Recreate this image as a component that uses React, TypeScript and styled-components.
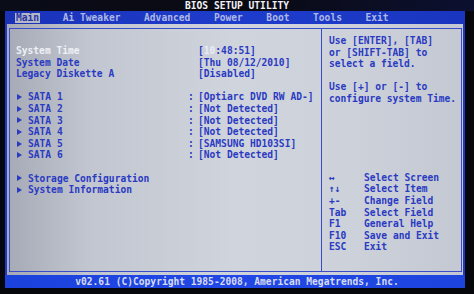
import React from "react";
import styled, { createGlobalStyle } from "styled-components";

const Global = createGlobalStyle`
  html, body { margin: 0; padding: 0; background: #05060a; }
  * { box-sizing: border-box; }
`;

const MONO = `"DejaVu Sans Mono", "Liberation Mono", monospace`;

const Screen = styled.div`
  width: 474px;
  height: 294px;
  background: #06070c;
  padding: 0 9px 6px 5px;
  display: flex;
  flex-direction: column;
  font-family: ${MONO};
  font-weight: bold;
  font-size: 9.6px;
  line-height: 11.6px;
  overflow: hidden;
`;

const TitleBar = styled.div`
  height: 11px;
  margin-right: -9px;
  margin-left: -5px;
  display: flex;
  align-items: center;
  justify-content: center;
  color: #f2f3f8;
  background: linear-gradient(90deg, #0a0c18 0%, #0a0a12 50%, #0c1030 100%);
`;

const Frame = styled.div`
  flex: 1;
  display: flex;
  flex-direction: column;
  background: #1c38c4;
`;

const MenuBar = styled.div`
  height: 13px;
  display: flex;
  align-items: center;
  gap: 21.6px;
  padding-left: 10px;
  background: linear-gradient(90deg, #1a32b8 0%, #1e3ccc 50%, #1a36c0 100%);
`;

const MenuItem = styled.span<{ $active?: boolean }>`
  padding: 0 1px;
  line-height: 10px;
  color: ${(p) => (p.$active ? "#2a36a8" : "#aeb8e6")};
  background: ${(p) => (p.$active ? "#b4b8c6" : "transparent")};
`;

const Body = styled.div`
  flex: 1;
  margin: 0 2px;
  padding: 4px 1px 3px 2px;
  background: linear-gradient(90deg, #a6aab6 0%, #c2c6d0 18%, #d0d4dc 50%, #cdd1da 75%, #c4c8d2 100%);
`;

const Box = styled.div`
  height: 100%;
  border: 1px solid #3b4cc8;
  display: grid;
  grid-template-columns: 312px 1fr;
`;

const LeftPane = styled.div`
  border-right: 1px solid #3b4cc8;
  padding: 16px 0 0 6px;
  display: flex;
  flex-direction: column;
`;

const RightPane = styled.div`
  padding: 6px 0 18px 7px;
  display: flex;
  flex-direction: column;
`;

const Row = styled.div`
  height: 11.6px;
  display: grid;
  grid-template-columns: 172px 10px 1fr;
  align-items: center;
  white-space: pre;
  color: #2a3ac2;
`;

const Label = styled.span<{ $selected?: boolean }>`
  display: flex;
  align-items: center;
  color: ${(p) => (p.$selected ? "#eef0f6" : "#2a3ac2")};
`;

const Marker = styled.span`
  display: inline-block;
  width: 0;
  height: 0;
  margin: 0 6px 0 1px;
  border-left: 5px solid #2a3ac2;
  border-top: 3px solid transparent;
  border-bottom: 3px solid transparent;
`;

const Colon = styled.span`
  color: #2a3ac2;
`;

const Value = styled.span`
  color: #2a3ac2;
`;

const Hot = styled.span`
  color: #e8ecf6;
`;

const Gap = styled.div`
  height: 11.6px;
`;

const HelpLine = styled.div`
  height: 11.6px;
  white-space: pre;
  color: #2a3ac2;
`;

const KeyList = styled.div`
  margin-top: auto;
  display: flex;
  flex-direction: column;
`;

const KeyRow = styled.div`
  height: 11.6px;
  display: grid;
  grid-template-columns: 35px 1fr;
  color: #2a3ac2;
  white-space: pre;
`;

const Footer = styled.div`
  height: 13px;
  display: flex;
  align-items: center;
  justify-content: center;
  padding-left: 4px;
  color: #d6dbf2;
  background: linear-gradient(90deg, #1c42dc 0%, #2148e6 50%, #1e44de 100%);
`;

const menus = ["Main", "Ai Tweaker", "Advanced", "Power", "Boot", "Tools", "Exit"];

type Item = { label: string; value?: React.ReactNode; sub?: boolean; colon?: boolean; selected?: boolean } | null;

const items: Item[] = [
  { label: "System Time", value: <>[<Hot>10</Hot>:48:51]</>, selected: true },
  { label: "System Date", value: "[Thu 08/12/2010]" },
  { label: "Legacy Diskette A", value: "[Disabled]" },
  null,
  { label: "SATA 1", value: "[Optiarc DVD RW AD-]", sub: true, colon: true },
  { label: "SATA 2", value: "[Not Detected]", sub: true, colon: true },
  { label: "SATA 3", value: "[Not Detected]", sub: true, colon: true },
  { label: "SATA 4", value: "[Not Detected]", sub: true, colon: true },
  { label: "SATA 5", value: "[SAMSUNG HD103SI]", sub: true, colon: true },
  { label: "SATA 6", value: "[Not Detected]", sub: true, colon: true },
  null,
  { label: "Storage Configuration", sub: true },
  { label: "System Information", sub: true },
];

const help = [
  "Use [ENTER], [TAB]",
  "or [SHIFT-TAB] to",
  "select a field.",
  "",
  "Use [+] or [-] to",
  "configure system Time.",
];

const keys: [string, string][] = [
  ["\u2194", "Select Screen"],
  ["\u2191\u2193", "Select Item"],
  ["+-", "Change Field"],
  ["Tab", "Select Field"],
  ["F1", "General Help"],
  ["F10", "Save and Exit"],
  ["ESC", "Exit"],
];

export default function App() {
  return (
    <>
      <Global />
      <Screen>
        <TitleBar>BIOS SETUP UTILITY</TitleBar>
        <Frame>
          <MenuBar>
            {menus.map((m, i) => (
              <MenuItem key={m} $active={i === 0}>
                {m}
              </MenuItem>
            ))}
          </MenuBar>
          <Body>
            <Box>
              <LeftPane>
                {items.map((it, i) =>
                  it ? (
                    <Row key={i}>
                      <Label $selected={it.selected}>
                        {it.sub && <Marker />}
                        {it.label}
                      </Label>
                      <Colon>{it.colon ? ":" : ""}</Colon>
                      <Value>{it.value}</Value>
                    </Row>
                  ) : (
                    <Gap key={i} />
                  )
                )}
              </LeftPane>
              <RightPane>
                {help.map((h, i) => (
                  <HelpLine key={i}>{h}</HelpLine>
                ))}
                <KeyList>
                  {keys.map(([k, d]) => (
                    <KeyRow key={d}>
                      <span>{k}</span>
                      <span>{d}</span>
                    </KeyRow>
                  ))}
                </KeyList>
              </RightPane>
            </Box>
          </Body>
          <Footer>v02.61 (C)Copyright 1985-2008, American Megatrends, Inc.</Footer>
        </Frame>
      </Screen>
    </>
  );
}
